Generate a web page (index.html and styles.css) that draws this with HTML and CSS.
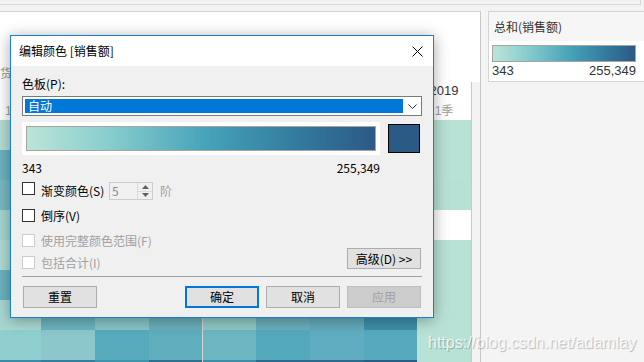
FILE: index.html
```html
<!DOCTYPE html>
<html lang="zh-CN">
<head>
<meta charset="utf-8">
<title>编辑颜色</title>
<link rel="stylesheet" href="styles.css">
</head>
<body>
<div class="topbar"></div>
<div class="main">
  <div class="view">
    <div class="view-top"><span class="rowhdr">货</span></div>
    <div class="table">
      <div class="grid">
        <div class="hc hc0"><span class="q">1季</span></div>
        <div class="hc"></div><div class="hc"></div><div class="hc"></div><div class="hc"></div>
        <div class="hc"></div><div class="hc"></div><div class="hc"></div>
        <div class="hc hc8"><span class="yr">2019</span><span class="q">1季</span></div>

        <div class="c" style="background:#b5ddd6"></div><div class="c" style="background:#a0d4d0"></div><div class="c" style="background:#b3dcd5"></div><div class="c" style="background:#8fcbcc"></div><div class="c d" style="background:#a9d8d2"></div><div class="c" style="background:#98d0ce"></div><div class="c" style="background:#b0dbd4"></div><div class="c" style="background:#84c5c9"></div><div class="c" style="background:#b9e2d6"></div>
        <div class="c" style="background:#6cb3bf"></div><div class="c" style="background:#8ac8ca"></div><div class="c" style="background:#6fb5c0"></div><div class="c" style="background:#5eabbd"></div><div class="c d" style="background:#7dbfc5"></div><div class="c" style="background:#68b1be"></div><div class="c" style="background:#5aa8bb"></div><div class="c" style="background:#4b9db5"></div><div class="c" style="background:#b9e2d6"></div>
        <div class="c" style="background:#79b9c3"></div><div class="c" style="background:#94cdcd"></div><div class="c" style="background:#7cbcc4"></div><div class="c" style="background:#6ab1be"></div><div class="c d" style="background:#88c5c9"></div><div class="c" style="background:#73b7c1"></div><div class="c" style="background:#66afbd"></div><div class="c" style="background:#56a6ba"></div><div class="c" style="background:#b8e1d6"></div>
        <div class="c" style="background:#a6d6d1"></div><div class="c" style="background:#b2dbd4"></div><div class="c" style="background:#9fd3d0"></div><div class="c" style="background:#8ccacb"></div><div class="c d" style="background:#a3d5d1"></div><div class="c" style="background:#93cecd"></div><div class="c" style="background:#88c7c9"></div><div class="c" style="background:#79bcc4"></div><div class="c" style="background:#ffffff"></div>
        <div class="c" style="background:#b0dbd4"></div><div class="c" style="background:#a6d6d1"></div><div class="c" style="background:#b5ddd6"></div><div class="c" style="background:#9cd2cf"></div><div class="c d" style="background:#acd9d3"></div><div class="c" style="background:#a0d4d0"></div><div class="c" style="background:#92cdcd"></div><div class="c" style="background:#86c5c9"></div><div class="c" style="background:#b9e2d6"></div>
        <div class="c" style="background:#6cb3bf"></div><div class="c" style="background:#7ebfc5"></div><div class="c" style="background:#62adbe"></div><div class="c" style="background:#58a7bb"></div><div class="c d" style="background:#74b9c2"></div><div class="c" style="background:#5eabbd"></div><div class="c" style="background:#52a3b9"></div><div class="c" style="background:#4496b1"></div><div class="c" style="background:#b9e2d6"></div>
        <div class="c" style="background:#a8d8d2"></div><div class="c" style="background:#6cb4bf"></div><div class="c" style="background:#88c5c8"></div><div class="c" style="background:#6aafbc"></div><div class="c d" style="background:#8fc9c6"></div><div class="c" style="background:#6aafbd"></div><div class="c" style="background:#64abbc"></div><div class="c" style="background:#3e90a9"></div><div class="c" style="background:#b9e2d6"></div>
        <div class="c" style="background:#8fcfd0"></div><div class="c" style="background:#8cc7cc"></div><div class="c" style="background:#57abbc"></div><div class="c" style="background:#60aebe"></div><div class="c d" style="background:#6db6c2"></div><div class="c" style="background:#55a9bc"></div><div class="c" style="background:#60adc1"></div><div class="c" style="background:#57a9bd"></div><div class="c" style="background:#b9e2d6"></div>
        <div class="c" style="background:#3a8ca8"></div><div class="c" style="background:#347fa0"></div><div class="c" style="background:#3f95ae"></div><div class="c" style="background:#2f6f90"></div><div class="c d" style="background:#3d8fa8"></div><div class="c" style="background:#2d6a8f"></div><div class="c" style="background:#2e6a8f"></div><div class="c" style="background:#2b5c86"></div><div class="c" style="background:#b9e2d6"></div>
      </div>
      <div class="strip"></div>
    </div>
  </div>
  <div class="side">
    <div class="legend">
      <div class="legend-title">总和(销售额)</div>
      <div class="legend-body">
        <div class="legend-ramp"></div>
        <div class="legend-vals"><span>343</span><span>255,349</span></div>
      </div>
    </div>
  </div>
</div>

<div class="wm">https://blog.csdn.net/adamlay</div>

<div class="dialog">
  <div class="titlebar">
    <span class="title">编辑颜色 [销售额]</span>
    <svg class="close" width="11" height="11" viewBox="0 0 11 11"><path d="M0.5 0.5 L10.5 10.5 M10.5 0.5 L0.5 10.5" stroke="#000" stroke-width="1" fill="none"/></svg>
  </div>
  <div class="dbody">
    <div class="lbl">色板(P):</div>
    <div class="select">
      <div class="sel-text">自动</div>
      <div class="chev"><svg width="9" height="5" viewBox="0 0 9 5"><polyline points="0.5,0.5 4.5,4.5 8.5,0.5" fill="none" stroke="#333" stroke-width="1"/></svg></div>
    </div>
    <div class="ramp-row">
      <div class="ramp-box"><div class="ramp"></div></div>
      <div class="swatch"></div>
    </div>
    <div class="vals"><span>343</span><span>255,349</span></div>
    <div class="opt opt1">
      <span class="cb"></span><span class="cbl cbl-w">渐变颜色(S)</span>
      <div class="spin">
        <span class="spin-val">5</span>
        <div class="spin-btns">
          <span class="spin-b"><svg width="7" height="4" viewBox="0 0 7 4"><polygon points="0,4 3.5,0 7,4" fill="#606060"/></svg></span>
          <span class="spin-b"><svg width="7" height="4" viewBox="0 0 7 4"><polygon points="0,0 3.5,4 7,0" fill="#606060"/></svg></span>
        </div>
      </div>
      <span class="unit">阶</span>
    </div>
    <div class="opt opt2"><span class="cb"></span><span class="cbl">倒序(V)</span></div>
    <div class="opt opt3 dis"><span class="cb"></span><span class="cbl">使用完整颜色范围(F)</span></div>
    <div class="opt4">
      <div class="opt dis"><span class="cb"></span><span class="cbl">包括合计(I)</span></div>
      <button class="btn">高级(D) &gt;&gt;</button>
    </div>
    <div class="sep"></div>
    <div class="btns">
      <button class="btn">重置</button>
      <span class="spacer"></span>
      <button class="btn primary">确定</button>
      <button class="btn gap">取消</button>
      <button class="btn gap disabled">应用</button>
    </div>
  </div>
</div>
</body>
</html>
```

FILE: styles.css
```css
* { box-sizing: border-box; }

body {
  margin: 0;
  width: 644px;
  height: 362px;
  overflow: hidden;
  position: relative;
  background: #f3f3f3;
  font-family: "Noto Sans CJK SC", "Noto Sans", sans-serif;
  font-size: 12px;
  color: #000;
}

.topbar {
  height: 5px;
  margin-right: 3px;
  border-bottom: 1px solid #d9d9d9;
  border-right: 1px solid #d9d9d9;
}

.main {
  margin-top: 6px;
  height: 351px;
  display: flex;
}

/* ---------- view ---------- */
.view {
  width: 481px;
  flex: none;
  background: #fff;
  border-top: 1px solid #d4d4d4;
  border-right: 1px solid #c8c8c8;
  display: flex;
  flex-direction: column;
}

.view-top {
  height: 70px;
  flex: none;
  padding-top: 53px;
  line-height: 16px;
}

.rowhdr {
  display: block;
  color: #9a9a9a;
  font-size: 12px;
}

.table {
  flex: 1;
  display: flex;
  min-height: 0;
}

.grid {
  width: 471px;
  flex: none;
  display: grid;
  grid-template-columns: 41px 54px 54px 53px 54px 54px 54px 53px 54px;
  grid-template-rows: 38px repeat(9, 30px);
  overflow: hidden;
}

.hc {
  display: flex;
  flex-direction: column;
  align-items: center;
  padding-top: 1px;
  font-family: "Liberation Sans", "Noto Sans CJK SC", sans-serif;
  font-size: 13px;
  line-height: 16px;
}

.hc0 {
  justify-content: flex-end;
  align-items: flex-start;
  padding-left: 5px;
  padding-bottom: 1px;
}

.yr { color: #333; }
.q { color: #a0a0a0; margin-top: 4px; font-size: 12px; }
.hc0 .q { margin-top: 0; }

.c { min-width: 0; }
.d { box-shadow: inset 1px 0 0 #d4d4d4; }

.strip {
  flex: 1;
  border-left: 1px solid #c8c8c8;
  background: #f3f3f3;
}

/* ---------- side / legend ---------- */
.side {
  flex: 1;
  padding-left: 7px;
  background: #f4f4f4;
}

.legend {
  height: 71px;
  margin-right: -2px;
  border: 1px solid #d4d4d4;
  background: #fff;
}

.legend-title {
  height: 29px;
  line-height: 29px;
  padding-left: 5px;
  background: #f6f6f6;
  color: #333;
  font-size: 12px;
}

.legend-body {
  padding: 4px 8px 0 3px;
}

.legend-ramp {
  width: 144px;
  height: 17px;
  border: 1px solid #a8a49c;
  background: linear-gradient(to right, #bce4d8 0%, #8ccfcf 22%, #45a2b9 55%, #347da0 78%, #2c5985 100%);
}

.legend-vals {
  width: 144px;
  margin-top: 2px;
  display: flex;
  justify-content: space-between;
  font-family: "Liberation Sans", sans-serif;
  font-size: 13px;
  line-height: 14px;
  color: #333;
}

/* ---------- watermark ---------- */
.wm {
  position: absolute;
  left: 428px;
  top: 334px;
  font-family: "Liberation Sans", sans-serif;
  font-size: 16px;
  line-height: 18px;
  color: rgba(255, 255, 255, 0.8);
  text-shadow: 1px 1px 1px rgba(0, 0, 0, 0.25);
  white-space: nowrap;
}

/* ---------- dialog ---------- */
.dialog {
  position: absolute;
  left: 10px;
  top: 35px;
  width: 424px;
  height: 283px;
  border: 1px solid #1a7fd4;
  background: #f0f0f0;
  box-shadow: 0 2px 14px rgba(0, 0, 0, 0.35);
  display: flex;
  flex-direction: column;
}

.titlebar {
  height: 30px;
  flex: none;
  background: #fff;
  display: flex;
  align-items: center;
  justify-content: space-between;
  padding: 0 10px 0 8px;
}

.title {
  font-size: 12px;
  line-height: 16px;
}

.close { display: block; }

.dbody {
  flex: 1;
  padding: 0 11px;
  display: flex;
  flex-direction: column;
  font-size: 12px;
}

.lbl {
  margin-top: 10px;
  line-height: 16px;
  height: 16px;
}

.select {
  margin-top: 4px;
  height: 20px;
  border: 1px solid #7a7a7a;
  background: #fff;
  padding: 2px 0 2px 2px;
  display: flex;
}

.sel-text {
  flex: 1;
  background: #0078d7;
  color: #fff;
  line-height: 14px;
  padding-left: 3px;
}

.chev {
  width: 18px;
  display: flex;
  align-items: center;
  justify-content: center;
}
.chev svg { display: block; }

.ramp-row {
  margin-top: 6px;
  height: 33px;
  display: flex;
  align-items: center;
  gap: 8px;
}

.ramp-box {
  width: 358px;
  height: 33px;
  background: #fff;
  padding: 4px;
}

.ramp {
  height: 25px;
  border: 1px solid #a8a49c;
  background: linear-gradient(to right, #bce4d8 0%, #8ccfcf 22%, #45a2b9 52%, #347da0 76%, #2c5985 100%);
}

.swatch {
  width: 32px;
  height: 29px;
  border: 1px solid #000;
  background: #2c5a86;
}

.vals {
  width: 358px;
  margin-top: 6px;
  display: flex;
  justify-content: space-between;
  line-height: 14px;
}

.opt {
  display: flex;
  align-items: center;
  line-height: 13px;
}

.cb {
  width: 13px;
  height: 13px;
  flex: none;
  border: 1px solid #333;
  background: #fff;
  margin-right: 6px;
}

.dis { color: #a0a0a0; }
.dis .cb { border-color: #cccccc; }

.opt1 {
  margin-top: 7px;
  height: 18px;
  align-items: flex-start;
}
.opt1 .cbl { line-height: 17px; }
.cbl-w { width: 68px; flex: none; }

.spin {
  width: 44px;
  height: 18px;
  border: 1px solid #cccccc;
  display: flex;
  color: #8a8a8a;
}

.spin-val {
  flex: 1;
  padding-left: 2px;
  line-height: 16px;
}

.spin-btns {
  width: 15px;
  border-left: 1px solid #dadada;
  display: flex;
  flex-direction: column;
}

.spin-b {
  flex: 1;
  display: flex;
  align-items: center;
  justify-content: center;
}
.spin-b + .spin-b { border-top: 1px solid #dadada; }
.spin-b svg { display: block; }

.unit {
  margin-left: 7px;
  line-height: 17px;
  color: #a0a0a0;
}

.opt2 { margin-top: 9px; height: 13px; }
.opt3 { margin-top: 12px; height: 13px; }

.opt4 {
  margin-top: 1px;
  height: 21px;
  display: flex;
  align-items: flex-end;
  justify-content: space-between;
  padding-right: 1px;
}

.btn {
  width: 74px;
  height: 21px;
  padding: 0;
  margin: 0;
  border: 1px solid #adadad;
  background: #e1e1e1;
  font-family: inherit;
  font-size: 12px;
  line-height: 16px;
  color: #000;
}

.sep {
  margin-top: 7px;
  height: 1px;
  background: #a0a0a0;
}

.btns {
  margin-top: 9px;
  height: 22px;
  display: flex;
  padding: 0 1px;
}
.btns .btn { height: 22px; }

.spacer { flex: 1; }

.gap { margin-left: 7px; }

.primary { border: 2px solid #0078d7; }

.disabled {
  background: #cccccc;
  border-color: #bfbfbf;
  color: #a0a0a0;
}
```
